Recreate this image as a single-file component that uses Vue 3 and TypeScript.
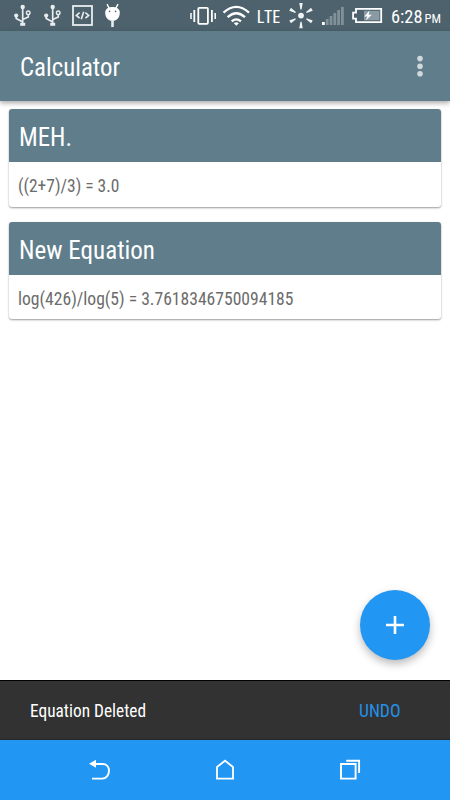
<script setup lang="ts">
interface Equation {
  title: string
  titleWidth: number
  body: string
  bodyWidth: number
}

const equations: Equation[] = [
  { title: 'MEH.', titleWidth: 53, body: '((2+7)/3) = 3.0', bodyWidth: 101.5 },
  { title: 'New Equation', titleWidth: 136, body: 'log(426)/log(5) = 3.7618346750094185', bodyWidth: 275.5 },
]

const signalBars: number[] = [3, 6, 9, 12, 15, 18]
</script>

<template>
  <div class="screen">
    <header class="status">
      <svg class="status-art" width="450" height="31" viewBox="0 0 450 31">
        <g v-for="x in [0, 30]" :key="x" :transform="`translate(${x} 0)`" fill="none" stroke="#e9edef" stroke-width="1.7">
          <path d="M22.7 7V24M22.7 22L16.2 18.4V14.5M22.7 19.6L28.3 17V14.5" />
          <circle cx="22.7" cy="7" r="2.2" fill="#e9edef" stroke="none" />
          <circle cx="16.2" cy="15.6" r="2.1" fill="#e9edef" stroke="none" />
          <circle cx="28.2" cy="12.8" r="1.8" stroke-width="1.4" />
          <path d="M20.2 22.8H25.2V25.8H20.2Z" fill="#e9edef" stroke="none" />
        </g>
        <rect x="73" y="6" width="19" height="19" fill="none" stroke="#e9edef" stroke-width="1.8" />
        <path d="M79.6 12.6L76.3 15.4L79.6 18.2M85.4 12.6L88.7 15.4L85.4 18.2M83.7 11.8L81.3 19.2" fill="none" stroke="#e9edef" stroke-width="1.6" />
        <path d="M105.2 12.5C105.2 9 108.2 6.9 112.5 6.9S119.8 9 119.8 12.5C119.8 17.5 117 20.8 112.5 20.8S105.2 17.5 105.2 12.5Z" fill="#fff" />
        <path d="M107 4.2L109.4 8.6M118 4.2L115.6 8.6" stroke="#fff" stroke-width="1.4" />
        <path d="M112.5 20V27" stroke="#e9edef" stroke-width="2.6" />
        <circle cx="109.6" cy="11.4" r="0.8" fill="#4f656f" />
        <circle cx="115.6" cy="11.4" r="0.8" fill="#4f656f" />

        <g fill="none" stroke="#fff">
          <rect x="198.3" y="7.8" width="9.6" height="16" rx="1" stroke-width="1.8" />
          <path d="M194.3 10V22M211.9 10V22" stroke-width="1.8" />
          <path d="M191 13V19M215.2 13V19" stroke-width="1.5" />
          <path d="M223.5 12.6Q236.3 1.2 249 12.6M227.6 17.1Q236.3 9.3 245 17.1M231.7 21.3Q236.3 17.4 240.9 21.3" stroke-width="2.3" />
        </g>
        <path d="M233.8 23.2Q236.3 21.2 238.8 23.2L236.3 25.7Z" fill="#fff" />
        <text class="t lte" x="256.5" y="23" textLength="24" lengthAdjust="spacingAndGlyphs">LTE</text>
        <g fill="#f0f3f4">
          <circle cx="301" cy="15.6" r="2.9" />
          <path v-for="a in [0, 60, 120, 180, 240, 300]" :key="a" d="M299.3 3H302.7L301.6 9.4H300.4Z" :transform="`rotate(${a} 301 15.6)`" />
        </g>
        <rect v-for="(h, i) in signalBars" :key="h" :x="322 + i * 3.8" :y="25 - h" width="2.8" :height="h" :fill="i ? '#81919a' : '#fff'" />
        <path d="M356 8.8H381.2V22.2H356V18.6H353.1V12.6H356Z" fill="none" stroke="#fff" stroke-width="1.8" />
        <rect x="364" y="10.8" width="15.5" height="9.5" fill="#8a9aa3" />
        <path d="M369.5 10.5L364.3 16.5H367.5L365.5 20.7L371.8 14.7H368.6Z" fill="#fff" />
        <text class="t clock" x="391" y="23" textLength="31.5" lengthAdjust="spacingAndGlyphs">6:28</text>
        <text class="t pm" x="424.5" y="23" textLength="16.5" lengthAdjust="spacingAndGlyphs">PM</text>
      </svg>
    </header>

    <div class="toolbar">
      <svg class="title" width="120" height="30">
        <text class="t heading" x="0" y="24" textLength="100" lengthAdjust="spacingAndGlyphs">Calculator</text>
      </svg>
      <svg class="more" width="8" height="24" viewBox="0 0 8 24">
        <circle v-for="y in [4.6, 12.2, 19.7]" :key="y" cx="4" :cy="y" r="2.8" />
      </svg>
    </div>

    <main class="list">
      <article v-for="eq in equations" :key="eq.title" class="card">
        <div class="card-head">
          <svg width="410" height="53">
            <text class="t heading" x="0" y="37" :textLength="eq.titleWidth" lengthAdjust="spacingAndGlyphs">{{ eq.title }}</text>
          </svg>
        </div>
        <div class="card-body">
          <svg width="410" height="44">
            <text class="t value" x="0" y="29.5" :textLength="eq.bodyWidth" lengthAdjust="spacingAndGlyphs">{{ eq.body }}</text>
          </svg>
        </div>
      </article>
      <button class="fab" aria-label="Add">
        <svg width="18" height="18" viewBox="0 0 18 18"><path d="M9 0V18M0 9H18" stroke="#fff" stroke-width="2.6" /></svg>
      </button>
    </main>

    <div class="snackbar">
      <svg width="140" height="60">
        <text class="t message" x="0" y="37" textLength="116" lengthAdjust="spacingAndGlyphs">Equation Deleted</text>
      </svg>
      <svg width="42" height="60">
        <text class="t undo" x="0" y="37" textLength="41.5" lengthAdjust="spacingAndGlyphs">UNDO</text>
      </svg>
    </div>

    <nav class="navbar">
      <svg width="24" height="24" viewBox="0 0 24 24">
        <path d="M6 6H14.5C18.5 6 21 8.8 21 12.8S18.5 20.6 14.5 20.6H4" fill="none" stroke="#fff" stroke-width="1.9" />
        <path d="M1 5.8L8 1.8V9.8Z" fill="#fff" />
      </svg>
      <svg width="24" height="24" viewBox="0 0 24 24">
        <path d="M4 9L12 2.7L20 9V20.6H4Z" fill="none" stroke="#fff" stroke-width="1.8" />
      </svg>
      <svg width="24" height="24" viewBox="0 0 24 24">
        <path d="M3 6H17.6V20.6H3ZM8.2 2.7H21.1V15" fill="none" stroke="#fff" stroke-width="1.9" />
      </svg>
    </nav>
  </div>
</template>

<style>
body {
  margin: 0;
}
</style>

<style scoped>
.screen {
  display: flex;
  flex-direction: column;
  width: 450px;
  height: 800px;
  overflow: hidden;
  background: #fff;
  font-family: 'Roboto Condensed', Roboto, sans-serif;
}
svg {
  display: block;
  flex: none;
}
.t {
  font-family: 'Roboto Condensed', Roboto, sans-serif;
  font-stretch: 75%;
}
.lte {
  font-family: 'Open Sans', 'Noto Sans', sans-serif;
  font-size: 18.5px;
  fill: #fff;
}
.clock {
  font-size: 18px;
  fill: #fff;
}
.pm {
  font-size: 13px;
  fill: #fff;
}
.heading {
  font-size: 25px;
  fill: #fff;
}
.value {
  font-size: 18px;
  fill: #6c6c6c;
}
.message {
  font-size: 18px;
  fill: #fff;
}
.undo {
  font-size: 18px;
  fill: #2490e8;
}
.status {
  flex: none;
  height: 31px;
  background: #4d626d;
}
.toolbar {
  flex: none;
  display: flex;
  align-items: center;
  justify-content: space-between;
  box-sizing: border-box;
  height: 70px;
  padding: 0 26px 0 20px;
  background: #607d8b;
  box-shadow: 0 2px 5px rgba(0, 0, 0, 0.35);
}
.title {
  margin-top: 2px;
}
.more {
  fill: #d0d8dc;
}
.list {
  flex: 1;
  position: relative;
  display: flex;
  flex-direction: column;
  gap: 15px;
  padding: 8px 9px;
}
.card {
  height: 97.5px;
  border-radius: 3px;
  overflow: hidden;
  background: #fff;
  box-shadow: 0 1px 2px rgba(0, 0, 0, 0.4);
}
.card-head {
  box-sizing: border-box;
  height: 53.4px;
  padding-left: 10px;
  background: #607d8b;
}
.card-body {
  padding-left: 9.4px;
}
.fab {
  position: absolute;
  right: 20px;
  bottom: 20px;
  display: flex;
  align-items: center;
  justify-content: center;
  width: 70px;
  height: 70px;
  padding: 0;
  border: 0;
  border-radius: 50%;
  background: #2196f3;
  box-shadow: 0 4px 9px rgba(0, 0, 0, 0.27);
}
.snackbar {
  flex: none;
  display: flex;
  justify-content: space-between;
  box-sizing: border-box;
  height: 60px;
  padding: 0 49px 0 30px;
  background: #323232;
  box-shadow: inset 0 1px #000, inset 0 -1px #282828;
}
.navbar {
  flex: none;
  display: flex;
  align-items: center;
  justify-content: center;
  gap: 101px;
  height: 60px;
  background: #2196f3;
}
</style>
